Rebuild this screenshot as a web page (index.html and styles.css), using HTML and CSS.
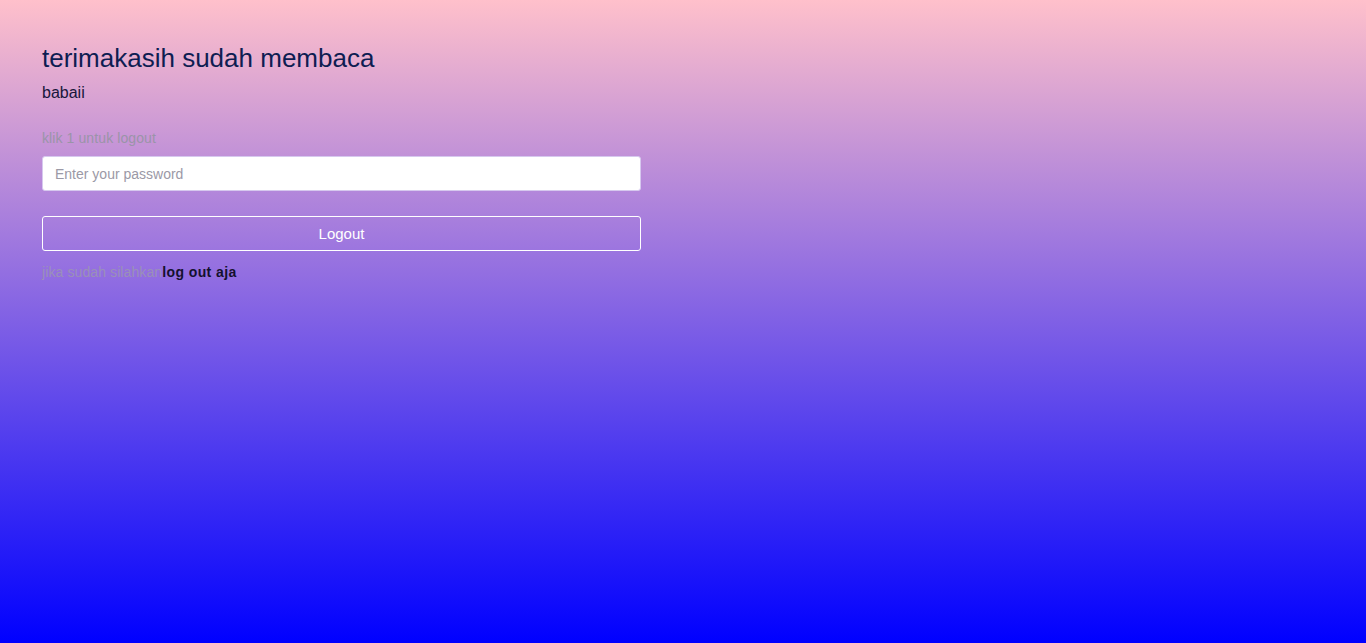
FILE: index.html
```html
<!DOCTYPE html>
<html>
<head>
<meta charset="utf-8">
<link rel="stylesheet" href="styles.css">
</head>
<body>
<div class="wrap">
  <h1 class="title">terimakasih sudah membaca</h1>
  <p class="sub">babaii</p>
  <form class="form">
    <label class="label">klik 1 untuk logout</label>
    <input class="input" type="password" placeholder="Enter your password">
    <button class="btn" type="button">Logout</button>
  </form>
  <p class="note">jika sudah silahkan<a class="link" href="#">log out aja</a></p>
</div>
</body>
</html>
```
FILE: styles.css
```css
html, body {
  margin: 0;
  padding: 0;
  height: 100%;
}
body {
  background: linear-gradient(#ffc0cb, #0000ff);
  font-family: "Liberation Sans", Arial, sans-serif;
}
.wrap {
  padding: 42px 0 0 42px;
  width: 599px;
}
.title {
  margin: 0;
  font-size: 26px;
  font-weight: normal;
  color: #0e1d52;
  line-height: 33px;
}
.sub {
  margin: 8px 0 0;
  font-size: 16px;
  line-height: 20px;
  color: #17163a;
}
.form {
  margin-top: 25px;
  display: flex;
  flex-direction: column;
}
.label {
  font-size: 14px;
  line-height: 20px;
  color: #9a94a8;
  letter-spacing: 0.1px;
}
.input {
  margin-top: 8px;
  box-sizing: border-box;
  height: 35px;
  width: 599px;
  border: 1px solid #d6c8ee;
  border-radius: 3px;
  padding: 0 12px;
  font-family: inherit;
  font-size: 14px;
  background: #fff;
  outline: none;
}
.input::placeholder {
  color: #9b99a6;
}
.btn {
  margin-top: 25px;
  box-sizing: border-box;
  height: 35px;
  width: 599px;
  background: transparent;
  border: 1px solid #fff;
  border-radius: 3px;
  color: #fff;
  font-family: inherit;
  font-size: 15px;
  cursor: pointer;
}
.note {
  margin: 11px 0 0;
  font-size: 14px;
  line-height: 20px;
  color: #9a90b8;
  letter-spacing: 0.1px;
}
.link {
  color: #14112e;
  font-weight: bold;
  text-decoration: none;
  letter-spacing: 0.4px;
}
```
